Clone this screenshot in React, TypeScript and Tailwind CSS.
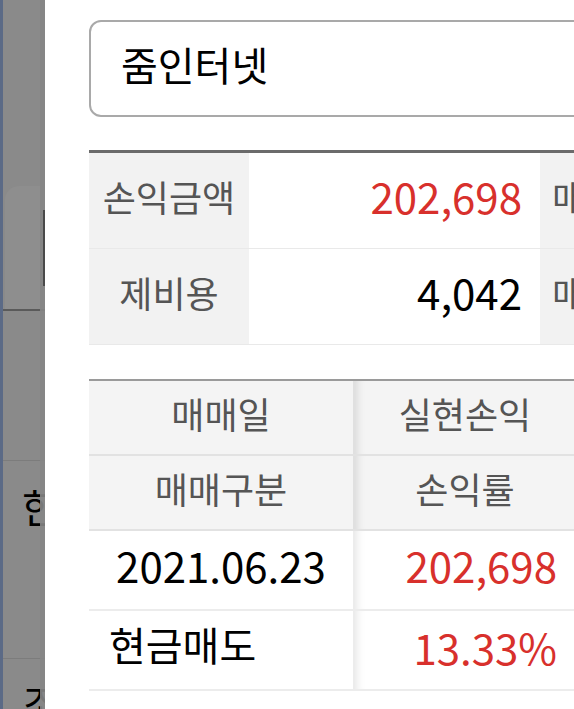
import React from "react";

const font = { fontFamily: '"Noto Sans CJK KR", "Noto Sans", sans-serif' };

const summary = [
  { label: "손익금액", value: "202,698", red: true, extra: "매도금액" },
  { label: "제비용", value: "4,042", red: false, extra: "매수금액" },
];

export default function App() {
  return (
    <div className="flex w-[574px] h-[709px] overflow-hidden bg-white" style={font}>
      {/* dimmed page behind the dialog */}
      <div className="relative w-[45px] shrink-0 h-full bg-[#8a8a8a] border-l-[3px] border-[#5b6a86] overflow-hidden">
        <div className="absolute left-[2px] top-[186px] w-[40px] h-[124px] rounded-tl-[14px] bg-[#8e8e8e]" />
        <div className="absolute left-0 right-0 top-[309px] h-[2px] bg-[#5a5a5a]" />
        <div className="absolute left-0 right-0 top-[460px] h-px bg-[#7c7c7c]" />
        <div className="absolute left-[19px] top-[486px] text-[40px] leading-none text-black whitespace-nowrap">
          한도
        </div>
        <div className="absolute left-0 right-0 top-[658px] h-px bg-[#7c7c7c]" />
        <div className="absolute left-[19px] top-[682px] text-[40px] leading-none text-black whitespace-nowrap">
          조회
        </div>
        <div className="absolute right-0 top-0 h-full w-[5px] bg-[#858585]/90" />
        <div className="absolute right-0 top-[210px] w-[2px] h-[76px] bg-[#4a4a4a]" />
      </div>

      <div className="flex-1 min-w-0 pl-[44px] pt-[20px] overflow-hidden">
        <div className="w-[520px] h-[97px] border-2 border-[#a9a9a9] rounded-[12px] flex items-center pl-[30px] pb-[9px]">
          <span className="text-[40px] text-black">줌인터넷</span>
        </div>

        <div className="mt-[33px] w-[520px] border-t-[3px] border-[#6b6b6b]">
          {summary.map((row) => (
            <div key={row.label} className="flex h-[96px] border-b border-[#e9e9e9]">
              <div className="w-[160px] shrink-0 bg-[#f2f2f2] flex items-center justify-center pb-[10px] text-[36px] text-[#555]">
                {row.label}
              </div>
              <div
                className={`w-[291px] shrink-0 flex items-center justify-end pr-[18px] pb-[10px] text-[42px] ${
                  row.red ? "text-[#d8302c]" : "text-black"
                }`}
              >
                {row.value}
              </div>
              <div className="flex-1 bg-[#f2f2f2] flex items-center pl-[12px] pb-[10px] text-[36px] text-[#555] whitespace-nowrap">
                {row.extra}
              </div>
            </div>
          ))}
        </div>

        <div className="mt-[34px] w-[486px] border-t-2 border-[#9a9a9a]">
          <div className="flex h-[75px] bg-[#f4f4f4] border-b-2 border-[#e2e2e2]">
            <div className="w-[266px] flex items-center justify-center pb-[10px] text-[36px] text-[#555] border-r-2 border-[#e0e0e0]">
              매매일
            </div>
            <div className="flex-1 flex items-center justify-center pb-[10px] text-[36px] text-[#555] shadow-[inset_10px_0_8px_-8px_rgba(0,0,0,0.12)]">
              실현손익
            </div>
          </div>
          <div className="flex h-[75px] bg-[#f4f4f4] border-b-2 border-[#e2e2e2]">
            <div className="w-[266px] flex items-center justify-center pb-[10px] text-[36px] text-[#555] border-r-2 border-[#e0e0e0]">
              매매구분
            </div>
            <div className="flex-1 flex items-center justify-center pb-[10px] text-[36px] text-[#555] shadow-[inset_10px_0_8px_-8px_rgba(0,0,0,0.12)]">
              손익률
            </div>
          </div>
          <div className="flex h-[80px] border-b-2 border-[#ececec]">
            <div className="w-[266px] flex items-center justify-center pb-[12px] text-[42px] text-black border-r-2 border-[#ececec]">
              2021.06.23
            </div>
            <div className="flex-1 flex items-center justify-end pr-[18px] pb-[12px] text-[42px] text-[#d8302c] shadow-[inset_10px_0_8px_-8px_rgba(0,0,0,0.1)]">
              202,698
            </div>
          </div>
          <div className="flex h-[80px] border-b-2 border-[#ececec]">
            <div className="w-[266px] flex items-center pl-[20px] pb-[12px] text-[40px] text-black border-r-2 border-[#ececec]">
              현금매도
            </div>
            <div className="flex-1 flex items-center justify-end pr-[18px] pb-[8px] text-[42px] text-[#d8302c] shadow-[inset_10px_0_8px_-8px_rgba(0,0,0,0.1)]">
              13.33%
            </div>
          </div>
        </div>
      </div>
    </div>
  );
}
